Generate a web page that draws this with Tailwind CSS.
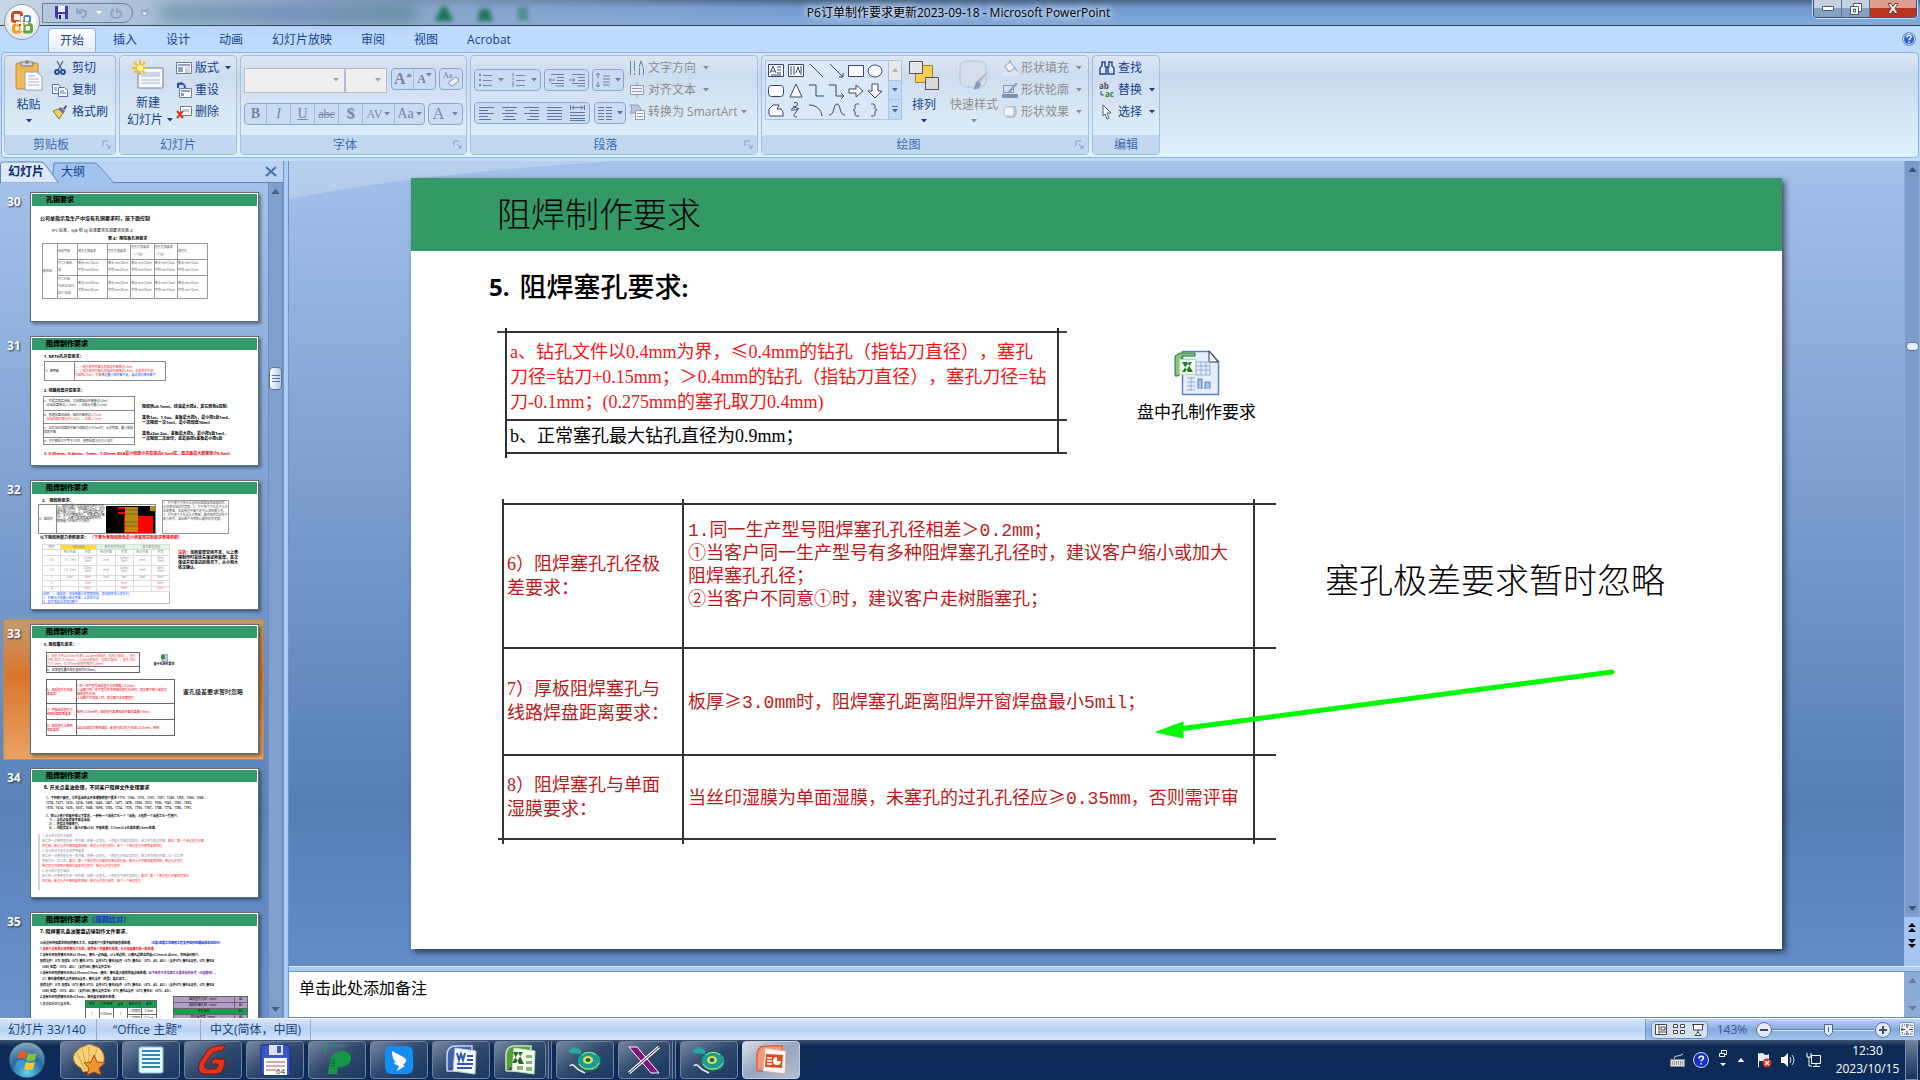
<!DOCTYPE html>
<html lang="zh-CN">
<head>
  <meta charset="UTF-8">
  <meta name="viewport" content="width=device-width, initial-scale=1.0">
  <title>P6订单制作要求更新2023-09-18 - Microsoft PowerPoint</title>
  <!-- Include Tailwind CSS -->
  <script src="https://cdn.jsdelivr.net/npm/@tailwindcss/browser@4"></script>
</head>
<body class="h-screen flex flex-col overflow-hidden bg-[#bfdbff] text-xs text-[#15428b] font-['Open_Sans','Noto_Sans_CJK_SC',sans-serif]">

  <!-- Shared symbols -->
  <svg class="hidden">
    <symbol id="caret" viewBox="0 0 6 4"><path d="M0 0h6L3 3.5z" fill="currentColor" /></symbol>
    <symbol id="up" viewBox="0 0 10 6"><path d="M0 6h10L5 0z" fill="currentColor" /></symbol>
    <symbol id="down" viewBox="0 0 10 6"><path d="M0 0h10L5 6z" fill="currentColor" /></symbol>
    <symbol id="launcher" viewBox="0 0 9 9"><path d="M1 6V1h5M4 4l4 4M8 5v3H5" fill="none" stroke="#7b9cc8" /></symbol>
    <symbol id="disc" viewBox="0 0 34 28">
      <path d="M3 15c0 9 10 12 18 11s12-5 12-10l-6-8-18 1z" fill="#44506e" />
      <path d="M2 20c3-4 6 3 9 4l6 3" stroke="#eee" stroke-width="1.5" fill="none" />
      <ellipse cx="21" cy="15" rx="12" ry="10" fill="#189c96" stroke="#0b5b60" />
      <path d="M11 18c4 7 16 7 20-1M14 9c4-4 11-3 14 0" stroke="#e2de54" fill="none" />
      <ellipse cx="20" cy="14" rx="5" ry="4" fill="#e2de54" />
      <ellipse cx="20" cy="14" rx="2.500" ry="2" fill="#14605f" />
      <path d="M1 4l6-3 6 3v4L2 7z" fill="#22aaa4" />
    </symbol>
  </svg>

  <!-- Title bar -->
  <header class="relative z-10 flex h-[26px] shrink-0 border-b border-[#33475f] bg-linear-to-b from-[#4c6688] via-[#7299cf] via-30% to-[#84abdc]">
    <div class="flex flex-1 items-center bg-linear-to-r from-[#c9d6e6] via-[#90a9c8] via-35% to-transparent">
      <div class="ml-[42px] flex h-5 w-[91px] items-center gap-2 rounded-r-full border border-[#65809f] bg-[#b1c4dc]/70 pl-3">
        <button aria-label="保存"><svg class="h-[13px] w-[13px]" viewBox="0 0 13 13"><path d="M0 0h13v13H2L0 11z" fill="#3c3ca8" /><path d="M3 0h7v6H3z" fill="#eef2fb" /><path d="M3 8h7v5H3z" fill="#ccd2ee" /><path d="M4 9h2v4H4z" fill="#23236d" /></svg></button>
        <button aria-label="撤消"><svg class="h-3 w-3" viewBox="0 0 12 12" fill="none" stroke="#8da4c3" stroke-width="2"><path d="M1 1v5h5M2 5c3-3 8-2 8 1s-2 4-4 5" /></svg></button>
        <svg class="h-1 w-1.5 text-white"><use href="#caret" /></svg>
        <button aria-label="重复"><svg class="h-3 w-3" viewBox="0 0 12 12" fill="none" stroke="#8da4c3" stroke-width="2"><path d="M4 2C0 4 0 11 6 11s6-6 3-8M7 1v4h4" /></svg></button>
      </div>
      <svg class="ml-2 h-2 w-[7px]" viewBox="0 0 7 8"><path d="M0 0h7v1H0zM0 3h7L3.500 7z" fill="#fff" stroke="#3e5c86" stroke-width=".5" /></svg>
      <!-- Windows showing through the glass -->
      <div class="ml-3 h-3 w-64 bg-linear-to-r from-[#3f7d86]/70 via-[#4f6da5]/60 to-[#2f6560]/60 blur-sm"></div>
      <svg class="ml-4 h-5 w-24 blur-[2px]" viewBox="0 0 96 20" fill="#1f7558"><path d="M12 1l10 17H2z" /><path d="M48 6h9l4 12H46z" /><path d="M86 4h10v14H86z" opacity=".5" /></svg>
    </div>
    <h1 class="flex items-center px-2 text-black [text-shadow:0_0_8px_#fff,0_0_6px_#fff]">P6订单制作要求更新2023-09-18 - Microsoft PowerPoint</h1>
    <div class="flex flex-1 items-start justify-end pr-[3px]">
      <div class="flex h-[18px] overflow-hidden rounded-b border border-t-0 border-[#3f5474] shadow-[0_0_0_1px_#c8dbf1]">
        <button aria-label="最小化" class="flex w-7 items-center justify-center border-r border-[#5d7595] bg-linear-to-b from-[#c3d1e2] from-45% to-[#86a0c2] to-50%"><svg class="h-[5px] w-3"><path d="M.5 .5h11v4H.5z" fill="#fff" stroke="#4a5a72" /></svg></button>
        <button aria-label="还原" class="flex w-7 items-center justify-center border-r border-[#5d7595] bg-linear-to-b from-[#c3d1e2] from-45% to-[#86a0c2] to-50%"><svg class="h-3 w-3" fill="#fff" stroke="#4a5a72"><path d="M3.500 .5h8v8h-8z" /><path d="M.5 3.500h8v8h-8zM3.500 6h2v3h-2z" /></svg></button>
        <button aria-label="关闭" class="flex w-[46px] items-center justify-center bg-linear-to-b from-[#dd9c90] from-45% to-[#b8341f] to-50%"><svg class="h-[11px] w-3" viewBox="0 0 12 11"><path d="M1 .5h3l2 3 2-3h3L8 5.500l3 5H8l-2-3-2 3H1l3-5z" fill="#fff" stroke="#6a3a3a" /></svg></button>
      </div>
    </div>
    <!-- Office button -->
    <button aria-label="Office 按钮" class="absolute left-1 top-1">
      <svg class="h-9 w-9" viewBox="0 0 36 36"><circle cx="18" cy="18" r="17.500" fill="#e4e8ee" stroke="#8297b3" /><circle cx="18" cy="15" r="14" fill="#fbfcfd" />
        <g fill="none"><rect x="8.500" y="8.500" width="9" height="9" rx="2" stroke="#cf4a22" stroke-width="3" /><rect x="20" y="12" width="6" height="6" rx="1.500" stroke="#4d86cc" stroke-width="2" /><rect x="9.500" y="21" width="7" height="7" rx="2" stroke="#f3a01d" stroke-width="3" /><rect x="20" y="20.500" width="7.500" height="7.500" rx="2" stroke="#66a52d" stroke-width="3" /><path d="M18 12v15M12 19h12" stroke="#fbfcfd" stroke-width="3" /></g>
        <path d="M15 16h2v2h-2zM19 19h2v2h-2z" fill="#f3a01d" /><path d="M19 16h2v2h-2z" fill="#4d86cc" /><path d="M15 20h2v2h-2z" fill="#cf4a22" />
      </svg>
    </button>
  </header>

  <!-- Ribbon tabs -->
  <nav class="flex h-[26px] shrink-0 items-end gap-[5px] pl-12 pr-1">
    <a href="#" class="flex h-6 items-center rounded-t border border-b-0 border-[#8db2e3] bg-linear-to-b from-white to-[#e3edf8] px-[11px]">开始</a>
    <a href="#" class="flex h-6 items-center px-3">插入</a>
    <a href="#" class="flex h-6 items-center px-3">设计</a>
    <a href="#" class="flex h-6 items-center px-3">动画</a>
    <a href="#" class="flex h-6 items-center px-3">幻灯片放映</a>
    <a href="#" class="flex h-6 items-center px-3">审阅</a>
    <a href="#" class="flex h-6 items-center px-3">视图</a>
    <a href="#" class="flex h-6 items-center px-3">Acrobat</a>
    <button aria-label="帮助" class="ml-auto mb-1.5"><svg class="h-[14px] w-[14px]" viewBox="0 0 14 14"><circle cx="7" cy="7" r="6.500" fill="#2a62d0" stroke="#6f92c8" /><circle cx="7" cy="7" r="5.500" fill="none" stroke="#dce9fb" /><path d="M5 5.500c0-3 4-3 4-.5C9 6.500 7 6.500 7 8.300M7 9.500V11" stroke="#fff" stroke-width="1.500" fill="none" /></svg></button>
  </nav>

  <!-- Ribbon -->
  <section class="mx-px mb-[3px] flex h-[106px] shrink-0 gap-[3px] rounded border border-[#8db2e3] bg-linear-to-b from-[#dbe6f4] via-[#c9d9ed] via-20% to-[#e0f2fc] px-0.5 pb-0.5 pt-0.5">

    <!-- Clipboard -->
    <div class="flex w-[112px] flex-col rounded border border-[#a3bfe0] bg-white/10">
      <div class="flex flex-1 pt-px">
        <button class="flex w-[47px] flex-col items-center pt-[3px]">
          <svg class="h-[31px] w-7" viewBox="0 0 28 31"><rect x="1" y="3" width="22" height="26" rx="2" fill="#f0b952" stroke="#bb8a3c" /><path d="M6 2h12v4H6z" fill="#d8d8d8" stroke="#777" /><circle cx="12" cy="2" r="2" fill="#888" /><path d="M10 12h12l5 5v13H10z" fill="#fff" stroke="#8da0c4" /><path d="M13 16h7M13 19h11M13 22h11M13 25h11" stroke="#9dafd0" /></svg>
          <span class="mt-1 leading-5">粘贴</span>
          <svg class="mt-1 h-1 w-1.5"><use href="#caret" /></svg>
        </button>
        <div class="flex flex-col">
          <button class="flex h-[22px] items-center gap-1"><svg class="h-4 w-4" viewBox="0 0 16 16" fill="none"><path d="M5 1l5 9M11 1L6 10" stroke="#5f7085" stroke-width="1.500" /><circle cx="5" cy="12" r="2" stroke="#2d4e95" stroke-width="2" /><circle cx="11" cy="12" r="2" stroke="#2d4e95" stroke-width="2" /></svg>剪切</button>
          <button class="flex h-[22px] items-center gap-1"><svg class="h-4 w-4" viewBox="0 0 16 16" fill="#fff" stroke="#4c6fb3"><path d="M.5 2.500h6l2 2v7h-8z" /><path d="M6.500 5.500h6l3 3v6h-9z" /><path d="M2 6h3M2 8h3M8 9h4M8 11h6" /></svg>复制</button>
          <button class="flex h-[22px] items-center gap-1"><svg class="h-4 w-4" viewBox="0 0 16 16"><path d="M1 7l6-2 4 4-4 6z" fill="#ecd662" stroke="#8c7a25" /><path d="M6 5l3-2 4 4-2 3z" fill="#6f7690" /><path d="M11 4l3-3 1 1-2 4z" fill="#4c5675" /></svg>格式刷</button>
        </div>
      </div>
      <div class="flex h-[19px] items-center bg-[#c2d8f0] pl-[14px] pr-1 text-[#3e6aaa]"><span class="flex-1 pl-[14px]">剪贴板</span><svg class="h-[9px] w-[9px]"><use href="#launcher" /></svg></div>
    </div>

    <!-- Slides -->
    <div class="flex w-[118px] flex-col rounded border border-[#a3bfe0] bg-white/10">
      <div class="flex flex-1 pt-px">
        <button class="flex w-[56px] flex-col items-center pt-[3px]">
          <svg class="h-[30px] w-8" viewBox="0 0 32 30"><rect x="6" y="8" width="25" height="20" rx="1" fill="#f7f9fc" stroke="#71809c" /><path d="M9 12h19v5H9z" fill="#ccd6e6" /><path d="M9 20h19M9 23h19" stroke="#a9b7cd" /><path d="M8 0v15M0 8h15M2 2l11 11M13 2L2 13" stroke="#f2bf18" stroke-width="2" /><circle cx="8" cy="8" r="3" fill="#fff399" /></svg>
          <span class="mt-1 leading-[17px]">新建</span>
          <span class="flex items-center gap-1 whitespace-nowrap pl-1 leading-[17px]">幻灯片<svg class="h-1 w-1.5"><use href="#caret" /></svg></span>
        </button>
        <div class="flex flex-col">
          <button class="flex h-[22px] items-center gap-[3px]"><svg class="h-4 w-4" viewBox="0 0 16 16"><path d="M.5 2.500h15v11H.5z" fill="#fff" stroke="#6d7e9c" /><path d="M2 4h12v2H2zM2 7h5v5H2z" fill="#8ba2c6" /><path d="M9 8h5M9 10h5M9 12h5" stroke="#9aabc8" /></svg>版式<svg class="ml-[3px] h-1 w-1.5"><use href="#caret" /></svg></button>
          <button class="flex h-[22px] items-center gap-[3px]"><svg class="h-4 w-4" viewBox="0 0 16 16"><path d="M3.500 6.500h12v9h-12z" fill="#fff" stroke="#6d7e9c" /><path d="M5 8h9v2H5zM5 11h3v3H5z" fill="#8ba2c6" /><path d="M2 6V2h4M2 2c4-2 7 0 7 4" stroke="#2457b8" stroke-width="2" fill="none" /></svg>重设</button>
          <button class="flex h-[22px] items-center gap-[3px]"><svg class="h-4 w-4" viewBox="0 0 16 16"><path d="M4.500 2.500h11v9h-11z" fill="#fff" stroke="#6d7e9c" /><path d="M7 5h6v3H7z" fill="#b6c5dd" /><path d="M1 7l6 7M7 7l-6 7" stroke="#de3118" stroke-width="2" /></svg>删除</button>
        </div>
      </div>
      <div class="flex h-[19px] items-center justify-center bg-[#c2d8f0] text-[#3e6aaa]">幻灯片</div>
    </div>

    <!-- Font -->
    <div class="flex w-[227px] flex-col rounded border border-[#a3bfe0] bg-white/10 text-[#7286ab]">
      <div class="flex flex-1 flex-col gap-2.5 px-[3px] pt-3 font-['Liberation_Serif',serif]">
        <div class="flex items-start">
          <select aria-label="字体" disabled class="h-[25px] w-[101px] appearance-none border border-[#b1bccd] bg-[#efefef] opacity-100"></select>
          <svg class="-ml-3 mt-2.5 h-1 w-1.5 text-[#a4a4a4]"><use href="#caret" /></svg>
          <select aria-label="字号" disabled class="ml-1.5 h-[25px] w-[43px] appearance-none border border-[#b1bccd] bg-[#efefef] opacity-100"></select>
          <svg class="-ml-3 mt-2.5 h-1 w-1.5 text-[#a4a4a4]"><use href="#caret" /></svg>
          <div class="ml-2.5 flex h-[22px] w-[45px] divide-x divide-[#a4bde0] rounded-sm border border-[#85a6d6] bg-[#cbdcf2]">
            <button aria-label="增大字号" class="flex flex-1 items-center justify-center text-base font-bold leading-5">A<svg class="mb-2 h-1 w-1.5"><use href="#up" /></svg></button>
            <button aria-label="减小字号" class="flex flex-1 items-center justify-center text-xs font-bold leading-5">A<svg class="mb-2 h-1 w-1.5"><use href="#caret" /></svg></button>
          </div>
          <button aria-label="清除格式" class="ml-[3px] flex h-[22px] w-6 items-center justify-center rounded-sm border border-[#85a6d6] bg-[#cbdcf2]"><svg class="h-4 w-4" viewBox="0 0 16 16"><text x="0" y="7" font-size="8" fill="#6a7ea5">Aa</text><rect x="6" y="8" width="10" height="5" rx="2" transform="rotate(-35 11 11)" fill="#f2f5fa" stroke="#8b9dbd" /></svg></button>
        </div>
        <div class="flex gap-[3px]">
          <div class="flex h-[22px] w-[181px] items-center divide-x divide-[#a4bde0] rounded-sm border border-[#85a6d6] bg-[#cbdcf2] text-sm">
            <button class="h-5 w-[22px] font-bold leading-5">B</button>
            <button class="h-5 w-6 italic leading-5">I</button>
            <button class="h-5 w-6 underline leading-5">U</button>
            <button class="h-5 w-6 line-through leading-5 text-xs">abc</button>
            <button class="h-5 w-6 font-bold leading-5 [text-shadow:1px_1px_1px_#8895b5]">S</button>
            <button class="flex h-5 w-8 items-center justify-center gap-0.5 text-xs leading-5">AV<svg class="h-1 w-1.5"><use href="#caret" /></svg></button>
            <button class="flex h-5 flex-1 items-center justify-center gap-0.5 leading-5">Aa<svg class="h-1 w-1.5"><use href="#caret" /></svg></button>
          </div>
          <button class="flex h-[22px] w-[35px] items-center justify-center gap-2 rounded-sm border border-[#85a6d6] bg-[#cbdcf2] text-base leading-5">A<svg class="h-1 w-1.5"><use href="#caret" /></svg></button>
        </div>
      </div>
      <div class="flex h-[19px] items-center bg-[#c2d8f0] pr-1 text-[#3e6aaa]"><span class="flex-1 pr-1 text-center">字体</span><svg class="h-[9px] w-[9px]"><use href="#launcher" /></svg></div>
    </div>

    <!-- Paragraph -->
    <div class="flex w-[288px] flex-col rounded border border-[#a3bfe0] bg-white/10 text-[#8d8d8d]">
      <div class="flex flex-1 pl-[3px] pt-px">
        <div class="flex w-[155px] flex-col gap-[11px] pt-3">
          <div class="flex gap-[3px]">
            <div class="flex h-[22px] w-[67px] items-center justify-around rounded-sm border border-[#85a6d6] bg-[#cbdcf2] text-[#7286ab]">
              <button aria-label="项目符号"><svg class="h-3.5 w-3.5" viewBox="0 0 14 14" stroke="currentColor"><path d="M1 2h2M1 7h2M1 12h2" stroke-width="2" /><path d="M5 2.500h9M5 7.500h9M5 12.500h9" /></svg></button><svg class="h-1 w-1.5"><use href="#caret" /></svg>
              <button aria-label="编号"><svg class="h-3.5 w-3.5" viewBox="0 0 14 14" stroke="currentColor"><path d="M2 0v4M1 6h2M1 9h2M1 11h2M1 13h2" /><path d="M5 2.500h9M5 7.500h9M5 12.500h9" /></svg></button><svg class="h-1 w-1.5"><use href="#caret" /></svg>
            </div>
            <div class="flex h-[22px] w-[45px] items-center justify-around rounded-sm border border-[#85a6d6] bg-[#cbdcf2] text-[#6b80a6]">
              <button aria-label="减少缩进"><svg class="h-3.5 w-4" viewBox="0 0 16 14" stroke="currentColor"><path d="M3 1.500h13M9 4.500h7M9 7.500h7M3 10.500h13M8 13h8M7 7H1M3 5L1 7l2 2" fill="none" /></svg></button>
              <button aria-label="增加缩进"><svg class="h-3.5 w-4" viewBox="0 0 16 14" stroke="currentColor"><path d="M3 1.500h13M9 4.500h7M9 7.500h7M3 10.500h13M8 13h8M0 7h6M4 5l2 2-2 2" fill="none" /></svg></button>
            </div>
            <div class="flex h-[22px] w-8 items-center justify-around rounded-sm border border-[#85a6d6] bg-[#cbdcf2] text-[#6b80a6]">
              <button aria-label="行距"><svg class="h-4 w-4" viewBox="0 0 16 16" stroke="currentColor" fill="none"><path d="M3 1v5M1 3l2-2 2 2M3 10v5M1 13l2 2 2-2M8 4h7M8 7h7M8 10h7M8 13h7" /></svg></button><svg class="h-1 w-1.5"><use href="#caret" /></svg>
            </div>
          </div>
          <div class="flex gap-1">
            <div class="flex h-[22px] w-[116px] items-center justify-around rounded-sm border border-[#85a6d6] bg-[#cbdcf2] text-[#5f759e]">
              <button aria-label="左对齐"><svg class="h-3.5 w-[15px]" stroke="currentColor"><path d="M0 1.500h15M0 4.500h9M0 7.500h15M0 10.500h9M0 13.500h12" /></svg></button>
              <button aria-label="居中"><svg class="h-3.5 w-[15px]" stroke="currentColor"><path d="M0 1.500h15M3 4.500h9M0 7.500h15M3 10.500h9M1 13.500h13" /></svg></button>
              <button aria-label="右对齐"><svg class="h-3.5 w-[15px]" stroke="currentColor"><path d="M0 1.500h15M6 4.500h9M0 7.500h15M6 10.500h9M3 13.500h12" /></svg></button>
              <button aria-label="两端对齐"><svg class="h-3.5 w-[15px]" stroke="currentColor"><path d="M0 1.500h15M0 4.500h15M0 7.500h15M0 10.500h15M0 13.500h15" /></svg></button>
              <button aria-label="分散对齐"><svg class="h-4 w-[15px]" stroke="currentColor" fill="none"><path d="M.5 0v5M14.500 0v5M2 2.500h11M4 .5l-2 2 2 2M11 .5l2 2-2 2M0 7.500h15M0 10.500h15M0 13.500h15M0 15.500h15" /></svg></button>
            </div>
            <div class="flex h-[22px] w-8 items-center justify-around rounded-sm border border-[#85a6d6] bg-[#cbdcf2] text-[#5f759e]">
              <button aria-label="分栏"><svg class="h-3.5 w-3.5" stroke="currentColor"><path d="M0 1.500h6M0 4.500h6M0 7.500h6M0 10.500h6M0 13.500h6M8 1.500h6M8 4.500h6M8 7.500h6M8 10.500h6M8 13.500h6" /></svg></button><svg class="h-1 w-1.5"><use href="#caret" /></svg>
            </div>
          </div>
        </div>
        <div class="flex flex-col">
          <button class="flex h-[22px] items-center gap-[3px] whitespace-nowrap"><svg class="h-4 w-4" viewBox="0 0 16 16" stroke="#6f7f9c" fill="none"><path d="M1.500 1v14M5.500 1v10M10.500 8v7M14.500 8v7M10 7l2-6 2 6M5.500 15v-2" /></svg>文字方向<svg class="ml-1 h-1 w-1.5"><use href="#caret" /></svg></button>
          <button class="flex h-[22px] items-center gap-[3px] whitespace-nowrap"><svg class="h-4 w-4" viewBox="0 0 16 16" stroke="#8e9bb3"><path d="M1.500 3.500h13v9h-13z" fill="#eef3fa" /><path d="M3 6.500h10M3 9.500h10M8 0v3M8 13v3" /></svg>对齐文本<svg class="ml-1 h-1 w-1.5"><use href="#caret" /></svg></button>
          <button class="flex h-[22px] items-center gap-[3px] whitespace-nowrap"><svg class="h-4 w-4" viewBox="0 0 16 16" stroke="#8e9bb3"><path d="M1 1h8l3 4-3 4H1l2-4z" fill="#b9c7dc" /><path d="M6.500 6.500h9v9h-9z" fill="#f3f6fb" /><path d="M8 9.500h6M8 12.500h6" /></svg>转换为 SmartArt<svg class="ml-px h-1 w-1.5"><use href="#caret" /></svg></button>
        </div>
      </div>
      <div class="flex h-[19px] items-center bg-[#c2d8f0] pr-1 text-[#3e6aaa]"><span class="flex-1 pr-1 text-center">段落</span><svg class="h-[9px] w-[9px]"><use href="#launcher" /></svg></div>
    </div>

    <!-- Drawing -->
    <div class="flex w-[328px] flex-col rounded border border-[#a3bfe0] bg-white/10">
      <div class="flex flex-1 pl-[3px] pt-px">
        <div class="mt-[3px] flex h-[60px] w-[137px] border border-[#a9c4e6] bg-[#dae8f9]">
          <svg class="h-[58px] w-[122px]" viewBox="0 0 122 58" fill="none" stroke="#34476b">
            <path d="M2.500 3.500h15v12h-15zM22.500 3.500h15v12h-15z" fill="#fff" /><path d="M4 12l3-7 3 7M5 10h4M11 6h4M11 9h4M11 12h4M5 14h10M25 5v9M28 5v9M30 12l2-6 2 6M35 5v9" />
            <path d="M44 3l13 13M64 3l13 13M77 12v4h-4" /><path d="M82.500 4.500h15v11h-15z" fill="#fff" /><ellipse cx="109" cy="10" rx="7" ry="6" fill="#fff" />
            <rect x="2.500" y="24.500" width="15" height="11" rx="3" fill="#fff" /><path d="M30 23l6 13H24z" fill="#fff" />
            <path d="M43 24h7v11h8M63 24h7v11h8M75 32l3 3-3 3" /><path d="M83 28h7v-4l7 6-7 6v-4h-7z" fill="#fff" /><path d="M106 23h6v7h4l-7 7-7-7h4z" fill="#fff" />
            <path d="M3 53V48l4-4h6l-2 4h4l2 3v4H4z" fill="#fff" /><path d="M28 42c4-2 5 2 1 4s-6 4-1 3 5-2 2 2-3 4 1 5M27 45l6 3M43 44c7 0 12 4 13 11M63 54c6 0 4-11 8-11s2 11 8 11M93 43c-4 0-4 0-4 4 0 1-1 2-2 2 1 0 2 1 2 2 0 4 0 4 4 4M105 43c4 0 4 0 4 4 0 1 1 2 2 2-1 0-2 1-2 2 0 4 0 4-4 4" />
          </svg>
          <div class="flex flex-1 flex-col divide-y divide-[#a9c4e6] border-l border-[#a9c4e6] bg-[#c6daf4]">
            <button aria-label="上一行" class="flex flex-1 items-center justify-center bg-[#e8e8e8] text-[#aaa]"><svg class="h-1 w-1.5"><use href="#up" /></svg></button>
            <button aria-label="下一行" class="flex flex-1 items-center justify-center text-[#3d6db3]"><svg class="h-1 w-1.5"><use href="#caret" /></svg></button>
            <button aria-label="其他形状" class="flex flex-1 flex-col items-center justify-center gap-0.5 text-[#3d6db3]"><span class="h-px w-1.5 bg-[#3d6db3]"></span><svg class="h-1 w-1.5"><use href="#caret" /></svg></button>
          </div>
        </div>
        <button class="flex w-11 flex-col items-center pt-[3px]">
          <svg class="h-[31px] w-8" viewBox="0 0 32 31"><path d="M7.500 5.500h17v17h-17z" fill="#f6cf4f" stroke="#a78428" /><path d="M1.500 1.500h13v12h-13z" fill="#e6e6e6" stroke="#555" /><path d="M17.500 17.500h13v12h-13z" fill="#d9d9d9" stroke="#555" /></svg>
          <span class="mt-1 leading-5">排列</span>
          <svg class="mt-1 h-1 w-1.5"><use href="#caret" /></svg>
        </button>
        <button class="flex w-14 flex-col items-center pt-[3px] text-[#8d8d8d]">
          <svg class="h-[31px] w-8" viewBox="0 0 32 31"><rect x="2" y="1" width="26" height="26" rx="6" fill="#d5deea" stroke="#b2c0d4" /><path d="M30 11L22 23l-3-2z" fill="#aab5c6" /><path d="M19 21l4 3c-1 5-5 6-8 5 3-2 1-5 4-8z" fill="#8597b4" /></svg>
          <span class="mt-1 leading-5">快速样式</span>
          <svg class="mt-1 h-1 w-1.5"><use href="#caret" /></svg>
        </button>
        <div class="flex flex-col text-[#8d8d8d]">
          <button class="flex h-[22px] items-center gap-[3px] whitespace-nowrap"><svg class="h-4 w-4" viewBox="0 0 16 16"><path d="M3 6l5-4 5 6-6 4z" fill="#f4f6fa" stroke="#8796b0" /><path d="M13 8l2 3M8 2V0" stroke="#8796b0" /><path d="M0 12h16v4H0z" fill="#dfe5ee" /></svg>形状填充<svg class="ml-1 h-1 w-1.5"><use href="#caret" /></svg></button>
          <button class="flex h-[22px] items-center gap-[3px] whitespace-nowrap"><svg class="h-4 w-4" viewBox="0 0 16 16"><path d="M1.500 3.500h10v7h-10z" fill="none" stroke="#8796b0" /><path d="M14 1l1 1-7 8-2 1 1-2z" fill="#98a7bf" stroke="#8796b0" /><path d="M0 12h16v4H0z" fill="#7f92b4" /></svg>形状轮廓<svg class="ml-1 h-1 w-1.5"><use href="#caret" /></svg></button>
          <button class="flex h-[22px] items-center gap-[3px] whitespace-nowrap"><svg class="h-4 w-4" viewBox="0 0 16 16"><path d="M3 5l3-3h8l1 8-3 4H4z" fill="#b5c0d2" /><rect x="2" y="3" width="10" height="9" rx="2" fill="#f2f5f9" stroke="#b5c0d2" /></svg>形状效果<svg class="ml-1 h-1 w-1.5"><use href="#caret" /></svg></button>
        </div>
      </div>
      <div class="flex h-[19px] items-center bg-[#c2d8f0] pr-1 text-[#3e6aaa]"><span class="flex-1 pr-5 text-center">绘图</span><svg class="h-[9px] w-[9px]"><use href="#launcher" /></svg></div>
    </div>

    <!-- Editing -->
    <div class="flex w-[68px] flex-col rounded border border-[#a3bfe0] bg-white/10">
      <div class="flex flex-1 flex-col pl-1.5 pt-px">
        <button class="flex h-[22px] items-center gap-[3px]"><svg class="h-4 w-4" viewBox="0 0 16 16" fill="#dce6f6" stroke="#2c4c8c" stroke-width="1.500"><path d="M3 2h3v4l1 2v6H1V8l2-2zM10 2h3v4l2 2v6H9V8l1-2zM6 7h4" /></svg>查找</button>
        <button class="flex h-[22px] items-center gap-[3px]"><svg class="h-4 w-4" viewBox="0 0 16 16" font-size="8" font-weight="bold"><text x="0" y="7" fill="#555">ab</text><text x="6" y="15" fill="#2a8a2a">ac</text><path d="M2 9v4h3" stroke="#2c4c8c" fill="none" /></svg>替换<svg class="ml-1 h-1 w-1.5"><use href="#caret" /></svg></button>
        <button class="flex h-[22px] items-center gap-[3px]"><svg class="h-4 w-4" viewBox="0 0 16 16"><path d="M4 1l8 8H8l2 5-2 1-2-5-2 2z" fill="#fff" stroke="#46597d" /></svg>选择<svg class="ml-1 h-1 w-1.5"><use href="#caret" /></svg></button>
      </div>
      <div class="flex h-[19px] items-center justify-center bg-[#c2d8f0] text-[#3e6aaa]">编辑</div>
    </div>
  </section>

  <!-- Workspace -->
  <div class="flex min-h-0 flex-1">

    <!-- Slide list -->
    <aside class="flex w-[283px] shrink-0 flex-col">
      <div class="relative flex h-[22px] shrink-0 items-center border-b border-[#5f87bd] bg-[#bcd3f5]">
        <svg class="absolute left-0 top-0 h-[22px] w-[115px]" viewBox="0 0 115 22" stroke="#5f87bd"><path d="M52 22l2-20h40q3 0 5 3l15 17" fill="#a3c3ef" /><path d="M.5 22V3q0-2 3-2h36q4 0 6 3l13 18z" fill="#dce9fb" /></svg>
        <button class="relative ml-2 font-bold text-[#0d2b66]">幻灯片</button>
        <button class="relative ml-[17px]">大纲</button>
        <button aria-label="关闭窗格" class="ml-auto mr-1.5"><svg class="h-[11px] w-3" viewBox="0 0 12 11"><path d="M1 1l10 9M11 1L1 10" stroke="#47719f" stroke-width="2" /></svg></button>
      </div>
      <div class="flex min-h-0 flex-1 bg-linear-to-b from-[#a4c1ea] via-[#5a82b9] via-75% to-[#6b92cc]">
        <ol class="min-w-0 flex-1 space-y-[3px] overflow-hidden pl-[3px] pr-1 pt-1 text-[4px] leading-[5px] text-black [&_b.n]:w-[27px]">

          <li class="flex h-[141px] pt-[5px]">
            <b class="n pl-1 pt-1 text-xs leading-3 text-white [text-shadow:1px_1px_2px_#234]">30</b>
            <div class="h-[130px] w-[229px] overflow-hidden border border-[#5b6b80] bg-white p-px shadow-[2px_2px_3px_#0006]">
              <div class="h-3 bg-[#339966] pl-[14px] text-[7px] font-black leading-[11px]">孔铜要求</div>
              <div class="mt-2.5 whitespace-nowrap pl-2 text-[5px] font-bold">公司单指示及生产中没有孔铜要求时，按下面控制</div>
              <div class="mt-[7px] pl-5">IPC 标准，GJB 和 QJ 标准要求孔铜要求见表 4：</div>
              <div class="mt-[3px] pl-[76px] font-bold">表 4：刚性板孔铜要求</div>
              <table class="ml-[10px] mt-0.5 h-14 w-[166px] table-fixed border-collapse whitespace-nowrap text-[3px] leading-[7px] text-[#555] [&_td]:border [&_td]:border-[#999]">
                <tr><td rowspan="3" class="w-[15px]">刚性板</td><td class="w-5">验收等级</td><td class="w-[30px]">通孔孔铜要求</td><td>盲孔孔铜要求</td><td>埋孔孔铜要求<br>（＞2层）</td><td>埋孔孔铜要求<br>（2 层）</td><td class="w-[30px]">微盲孔</td></tr>
                <tr><td>IPC-II 级标<br>准</td><td>单点 min18um<br>平均 min20um</td><td>单点 min18um<br>平均 min20um</td><td>单点 min13um<br>平均 min15um</td><td>单点 min13um<br>平均 min15um</td><td>单点 min10um<br>平均 min12um</td></tr>
                <tr><td>IPC-III 级<br>/GJB362B/Q<br>J831 标准</td><td>单点 min20um<br>平均 min25um</td><td>单点 min20um<br>平均 min25um</td><td>单点 min13um<br>平均 min15um</td><td>单点 min13um<br>平均 min15um</td><td>单点 min10um<br>平均 min12um</td></tr>
              </table>
            </div>
          </li>

          <li class="flex h-[141px] pt-[5px]">
            <b class="n pl-1 pt-1 text-xs leading-3 text-white [text-shadow:1px_1px_2px_#234]">31</b>
            <div class="h-[130px] w-[229px] overflow-hidden border border-[#5b6b80] bg-white p-px shadow-[2px_2px_3px_#0006]">
              <div class="h-3 bg-[#339966] pl-[14px] text-[7px] font-black leading-[11px]">阻焊制作要求</div>
              <div class="mt-1 pl-3 font-bold">1. NPTH孔开窗要求：</div>
              <table class="ml-3 mt-0.5 h-5 w-[122px] border-collapse text-[3px] leading-[4px] text-red-500 [&_td]:border [&_td]:border-[#888]">
                <tr><td class="w-[30px] text-black">1）单面板</td><td>1、一般孔单面开窗孔的阻焊开窗单边≥3mil<br>2、二钻孔单面开窗孔的阻焊开窗单边≥4mil，如果空间不足<br>可减到2.5mil，仍需<span class="text-blue-700">单边最小按开窗不足，要走询问单给客户</span></td></tr>
              </table>
              <div class="mt-[7px] pl-3 font-bold">2. 线路焊盘开窗要求：</div>
              <div class="mt-[3px] flex gap-[7px]">
                <table class="ml-[11px] h-[49px] w-[92px] border-collapse text-[3px] leading-[4px] text-[#333] [&_td]:border [&_td]:border-[#888]">
                  <tr><td>a、有覆盖铜盖油板，大焊盘阻焊开窗单边≥3mil<br>（BGA焊盘单边≥1.5mil），局部允许最小≥2mil</td></tr>
                  <tr><td>b、普通焊盘绿油板，阻焊开窗单边<span class="text-red-500">≥2.5mil<br>（BGA焊盘开窗允许≥2mil），局部≥1.5mil</span></td></tr>
                  <tr><td>c、当有SMD焊盘的开窗与线路边小于2mil时，允许削盘，最小按线路宽开窗</td></tr>
                  <tr><td>d、对于圆焊大于等于3.0时，按照焊盘与孔大小加大</td></tr>
                </table>
                <div class="w-[86px] whitespace-nowrap pt-2 text-[4px] font-bold">阻焊桥≥0.1mm，绿油最大按4，其它颜色6控制。<div class="mt-1.5">黑色1oz，1.5oz，金板最大按5，最小按5处1mil，<br>一次阻焊一次1mil，最小按焊盘10mil</div><div class="mt-1.5">黑色≥2oz 2oz，金板最大按5，最小按5处1mil，<br>一次阻焊二次丝印，且最后按5金板最小按5处</div></div>
              </div>
              <div class="mt-1.5 whitespace-nowrap pl-3 font-bold text-red-600">3. 0.35mm、0.4mm、1mm、1.05mm BGA最小焊盘小开窗单边0.5mil控，盘边露最大能容至小0.5mil。</div>
            </div>
          </li>

          <li class="flex h-[141px] pt-[5px]">
            <b class="n pl-1 pt-1 text-xs leading-3 text-white [text-shadow:1px_1px_2px_#234]">32</b>
            <div class="h-[130px] w-[229px] overflow-hidden border border-[#5b6b80] bg-white p-px shadow-[2px_2px_3px_#0006]">
              <div class="h-3 bg-[#339966] pl-[14px] text-[7px] font-black leading-[11px]">阻焊制作要求</div>
              <div class="mt-1 flex pl-1.5">
                <div>
                  <div class="pl-1 font-bold">3.　阻焊桥要求：</div>
                  <div class="mt-px flex h-[30px] w-[118px] items-center border border-[#888] text-[3px] leading-[3px] text-[#333]">
                    <span class="w-[17px]">3）阻焊桥</span>
                    <span class="h-full w-[50px] border-l border-[#888]">1、阻焊桥最小宽度按油墨颜色不同进行区分控制，绿油最小4mil，其它颜色最小5mil；2、当焊盘间距不足时，允许开整窗处理，并需要询问客户；3、当客户要求保留阻焊桥时，需按能力评审后方可制作</span>
                    <svg class="h-[27px] w-[49px]" viewBox="0 0 49 27"><path d="M0 0h49v27H0z" /><path d="M12 1h8v2h-8zM12 6h8v2h-8zM18 10h29v17H18z" fill="#f00" /><path d="M19 1h13v25H19zM44 0h5v5h-5z" fill="#b58a10" /><path d="M19 4h13M19 8h13M19 16h13M19 20h13" stroke="#7d6212" /></svg>
                  </div>
                </div>
                <div class="ml-1.5 mt-0.5 h-[34px] w-[67px] border border-[#999] text-[3px] leading-[4px] text-[#555]">1、对于按下方所示位置的焊盘需要保留阻焊桥，必须保证阻焊桥宽度。2、对于按下方位置不允许出现整窗，如果单边开窗不足可以减到最小值。3、对于按下方位置允许整窗。最终按照实际生产能力制作，或由客户书面确认最终的桥宽度。</div>
              </div>
              <div class="mt-px whitespace-nowrap pl-2 font-bold">以下阻焊桥能力参照要求：　<span class="text-red-600">（下表为各阻焊颜色最小桥宽度控制要求表格参数）</span></div>
              <div class="mt-1 flex">
                <div class="ml-2.5">
                  <table class="h-12 w-[128px] table-fixed border-collapse whitespace-nowrap text-center text-[3px] leading-[3px] text-[#888] [&_td]:border [&_td]:border-[#ddd]">
                    <tr><td>铜厚</td><td colspan="2" class="bg-yellow-300">绿色油墨</td><td colspan="2" class="bg-green-100">黑色及白色油墨</td><td colspan="2" class="bg-green-100">其它颜色油墨</td></tr>
                    <tr><td></td><td>单边开窗</td><td>桥宽</td><td>单边开窗</td><td>桥宽</td><td>单边开窗</td><td>桥宽</td></tr>
                    <tr><td>0.5</td><td>1.5~2mil</td><td class="h-2.5">3.5mil<br>4mil</td><td>2mil</td><td>4.5mil<br>5mil</td><td>2mil</td><td>4mil<br>5mil</td></tr>
                    <tr><td>1.0</td><td>1.5~2mil</td><td class="h-2.5">3.5mil<br>4mil</td><td>2mil</td><td>4.5mil<br>5mil</td><td>2mil</td><td>4mil<br>5mil</td></tr>
                    <tr><td>2</td><td>2mil</td><td>4mil</td><td>2mil</td><td>5mil</td><td>2mil</td><td>5mil</td></tr>
                    <tr><td>3</td><td></td><td class="text-red-400">5mil</td><td></td><td class="text-red-400">6mil</td><td></td><td class="text-red-400">6mil</td></tr>
                    <tr><td>4</td><td></td><td class="text-red-400">6mil</td><td></td><td class="text-red-400">6mil</td><td></td><td class="text-red-400">6mil</td></tr>
                  </table>
                  <div class="h-3 w-[128px] whitespace-nowrap border border-t-0 border-[#bbb] text-[3px] leading-[4px] text-blue-600">说明：1、阻焊桥：绿油按最小桥宽度控制，其他颜色按上表执行；<br>2、开窗允许按最小单边开窗，以实际为准<br>3、如不满足必须询问客户</div>
                </div>
                <div class="ml-2 mt-1.5 w-[62px] font-bold"><span class="text-red-600">注意：</span>当桥宽度空间不足，以上表格制作时需优先保证桥宽度，其次保证开窗单边的情况下，从小到大依次确认。</div>
              </div>
            </div>
          </li>

          <li class="flex h-[141px] border border-[#b88a5c] bg-linear-to-b from-[#c39a6c] via-[#d9752b] via-40% to-[#e8a265] pt-1">
            <b class="n -ml-px shrink-0 pl-1 pt-1 text-xs leading-3 text-white [text-shadow:1px_1px_2px_#234]">33</b>
            <div class="h-[130px] w-[229px] shrink-0 overflow-hidden border border-[#5b6b80] bg-white p-px shadow-[2px_2px_3px_#0006]">
              <div class="h-3 bg-[#339966] pl-[14px] text-[7px] font-black leading-[11px]">阻焊制作要求</div>
              <div class="mt-1 pl-3 font-bold">5. 阻焊塞孔要求：</div>
              <div class="mt-[5px] flex">
                <table class="ml-[14px] h-[21px] w-[94px] border-collapse whitespace-nowrap text-[3px] leading-[4px] text-red-500 [&_td]:border [&_td]:border-[#666]">
                  <tr><td>a、钻孔文件以0.4mm为界，≤0.4mm的钻孔（指钻刀直径），塞孔<br>刀径=钻刀+0.15mm；＞0.4mm的钻孔（指钻刀直径），塞孔刀径=<br>刀-0.1mm；(0.275mm的塞孔取刀0.4mm)</td></tr>
                  <tr><td class="text-black">b、正常塞孔最大钻孔直径为0.9mm；</td></tr>
                </table>
                <div class="ml-2.5 flex w-7 flex-col items-center pt-0.5 text-[3px] font-bold"><svg class="h-2 w-[7px]"><path d="M1 0h5l1 2v6H1z" fill="#bcd0ee" stroke="#356" stroke-width=".5" /><path d="M0 1h4v4H0z" fill="#2f9444" /></svg>盘中孔制作要求</div>
              </div>
              <div class="mt-1.5 flex">
                <table class="ml-[14px] h-14 w-[129px] border-collapse whitespace-nowrap text-[3px] leading-[4px] text-red-600 [&_td]:border [&_td]:border-[#666]">
                  <tr><td class="w-[30px]">6）阻焊塞孔孔径极<br>差要求：</td><td class="h-6">1.同一生产型号阻焊塞孔孔径相差＞0.2mm；<br>①当客户同一生产型号有多种阻焊塞孔孔径时，建议客户缩小或加大<br>阻焊塞孔孔径；<br>②当客户不同意①时，建议客户走树脂塞孔；</td></tr>
                  <tr><td>7）厚板阻焊塞孔与<br>线路焊盘距离要求：</td><td class="h-4">板厚≥3.0mm时，阻焊塞孔距离阻焊开窗焊盘最小5mil；</td></tr>
                  <tr><td>8）阻焊塞孔与单面<br>湿膜要求：</td><td class="h-4">当丝印湿膜为单面湿膜，未塞孔的过孔孔径应≥0.35mm，否则</td></tr>
                </table>
                <span class="ml-2 mt-2.5 whitespace-nowrap text-[6px] font-medium leading-[6px]">塞孔极差要求暂时忽略</span>
              </div>
            </div>
          </li>

          <li class="flex h-[141px] pt-[5px]">
            <b class="n pl-1 pt-1 text-xs leading-3 text-white [text-shadow:1px_1px_2px_#234]">34</b>
            <div class="h-[130px] w-[229px] overflow-hidden whitespace-nowrap border border-[#5b6b80] bg-white p-px shadow-[2px_2px_3px_#0006]">
              <div class="h-3 bg-[#339966] pl-[14px] text-[7px] font-black leading-[11px]">阻焊制作要求</div>
              <div class="mt-[3px] pl-3 font-bold text-[5px]">6. 开关点盖油处理，不同客户阻焊文件处理要求</div>
              <div class="mt-1.5 pl-3.5 text-[3px] font-semibold leading-[5px]">1、下列客户板件，字符盖油的文件处理按照客户要求 1173、1206、1213、1232、1237、1249、1255、1260、1268、<br>1274、1327、1413、1418、1439、1443、1467、1477、1478、1500、1522、1530、1541、1552、1563、<br>1570、1614、1620、1637、1668、1695、1700、1724、1725、1750、1767、1768、1774、1780、1791。</div>
              <div class="mt-[3px] pl-3.5 text-[3px] font-semibold leading-[4px]">2、除以上客户的板件按以下要求，一种有一个油墨工艺一个「油墨」上阻焊一个油墨工艺一些客户。<br>　1）、半孔边及焊盘不能盖油墨。<br>　2）、外层走线按客户。<br>　3）、线路宽度上（最小开窗≥0.8）不做处理，0.2mm以上孔需处理0.3mm处理。</div>
              <div class="ml-1.5 mt-1 h-14 border-l-2 border-[#cdd8da] pl-0.5 text-[3px] leading-[5px] text-[#889]">1. 设计的半塞孔无要求<br>若工序一边单面塞孔另一面开窗，则单一边塞孔，一面塞孔可按正常处理。若工序为两边开窗，<span class="text-red-500">备注：第一个单边塞孔开窗</span><br><span class="text-red-500">处理板，单边允许开窗按要求控制，单边允许塞孔制作，若下一个单边塞孔时按照要求处理</span><br>2. 设计的过孔塞孔及加厚铜要求<br>若工序一边单面塞孔另一面开窗，则单一边塞孔，一面塞孔可按正常处理。若工序为两边开窗二次一次工序<br>的制作为一次工序。<span class="text-red-500">备注：第一个单边塞孔开窗处理单位处理板，单边允许开窗按要求控制，单边允许塞孔</span><br><span class="text-red-500">单边塞孔时按照开窗制作要求处理即可，单边允许塞孔制作</span><br>3. 设计的半塞孔阻焊<br>若工序一边单面塞孔另一面开窗，则单一边塞孔，一面塞孔可按正常处理。<span class="text-red-500">备注：第一个单边塞孔开窗处理单位</span><br><span class="text-red-500">处理板，单边允许开窗按要求控制，单边允许塞孔制作，若下一个单边塞孔</span></div>
            </div>
          </li>

          <li class="flex h-[141px] pt-[5px]">
            <b class="n pl-1 pt-1 text-xs leading-3 text-white [text-shadow:1px_1px_2px_#234]">35</b>
            <div class="h-[130px] w-[229px] overflow-hidden whitespace-nowrap border border-[#5b6b80] bg-white p-px shadow-[2px_2px_3px_#0006]">
              <div class="h-3 bg-[#339966] pl-[14px] text-[7px] font-black leading-[11px]">阻焊制作要求<span class="text-blue-800">（周期比对）</span></div>
              <div class="mt-[3px] pl-2 text-[5px] font-bold">7. 阻焊塞孔盖油塞盘边缘制作文件要求。</div>
              <div class="mt-1.5 pl-2 text-[3px] font-semibold leading-[6px]">以前没有特殊要求的阻焊塞孔工艺，如果客户只要不做的按普通处理。　　　　　　<span class="font-black text-blue-700">（D层/底层工艺按照工程文件制作处理标准单位执行）</span><br><span class="text-red-600">1.当客户没有指定阻焊塞孔工艺的，按照两个单面塞孔处理，允许双面塞孔按一般处理。</span><br>2.当有孔径阻焊塞孔孔径≤0.35mm，塞孔一边两面，以上单边的，以塞孔边距离焊盘≥0.2mm≤0.45mm，否则询问客户。<br>阻焊文件：GTS_阻焊A（GTS_塞孔 GTO）文件GTS_塞孔B文件（GTS_塞孔A）（GTS、A5、A5L）（文件GTS_塞孔A文件，GTS_塞孔B<br>（GBS_底层）（GTS、A5L）（文件GBS_塞孔文件命名）<br>3.当有孔径阻焊塞孔孔径≥0.35mm≤0.5mm（塞孔）塞孔最大按照焊盘边缘处理。<span class="text-purple-800">此下两条为非常规工艺要求仅供参考（内部使用）。</span><br>（2）塞孔按照塞孔文件制作A文件，塞孔文件（外层）最后加工。<br>阻焊文件：GTS_阻焊A（GTS_塞孔 GTO）文件GTS_塞孔B文件（GTS_塞孔A）（GTS、A5、A5L）（文件GTS_塞孔A文件，GTS_塞孔B<br>（GBS_底层）（GTS、A5L）（文件GBS_塞孔文件命名）GTS_塞孔A文件（GTS_塞孔B）（GTS、A5L）<br>4.当有孔径阻焊塞孔孔径≥0.5mm，按单面开窗制作处理。</div>
              <div class="flex pl-2 text-center text-[3px] leading-[5px]"><span class="pt-0.5">5.其他阻焊处理要求单。</span>
                <table class="ml-3 h-[22px] w-[72px] table-fixed border-collapse [&_td]:border [&_td]:border-[#666]"><tr class="bg-[#17a050]"><td>序号</td><td>文件名称</td><td>层名</td><td>制作方式</td><td>备注</td></tr><tr><td rowspan="2">1</td><td rowspan="2">0.35mm</td><td rowspan="2">1</td><td>一次塞孔</td><td>0.3um</td></tr><tr><td>二次塞孔</td><td>0.2um</td></tr></table>
                <table class="-mt-1 ml-4 h-[22px] w-[75px] border-collapse bg-[#b39cc9] [&_td]:border [&_td]:border-[#666]"><tr><td>阻焊塞孔孔径（mm）</td><td>A4</td></tr><tr><td>阻焊开窗孔径（mm）</td><td>A5</td></tr><tr class="bg-[#17a050]"><td>塞孔油墨</td><td>A5L</td></tr><tr><td>塞孔板厚度（mm）</td><td>A6</td></tr></table>
              </div>
            </div>
          </li>
        </ol>

        <!-- Slide list scrollbar -->
        <div class="flex w-[15px] flex-col items-center border-x border-[#6e8fbf] bg-[#7f9fcd] py-1.5 text-[#4a5f82]">
          <svg class="h-[5px] w-[9px]"><use href="#up" /></svg>
          <div class="mt-[173px] flex h-[23px] w-[13px] shrink-0 flex-col items-center justify-center gap-0.5 rounded-sm border border-[#5b7499] bg-linear-to-r from-white to-[#b7c9e4]"><i class="h-px w-2 bg-[#5b7499]"></i><i class="h-px w-2 bg-[#5b7499]"></i><i class="h-px w-2 bg-[#5b7499]"></i></div>
          <svg class="mt-auto h-[5px] w-[9px]"><use href="#down" /></svg>
        </div>
      </div>
    </aside>

    <!-- Splitter -->
    <div class="w-1.5 shrink-0 border-x border-[#6c95cc] bg-[#aecbf5]"></div>

    <!-- Editor -->
    <main class="flex min-w-0 flex-1 flex-col">
      <div class="flex min-h-0 flex-1">
        <div class="relative flex min-w-0 flex-1 bg-linear-to-b from-[#a4c1ea] via-[#567eb5] via-80% to-[#638dc8] px-[122px] py-[17px]">
          <svg class="absolute left-0 top-0 h-40 w-[420px]" viewBox="0 0 420 160"><path d="M0 0h330Q130 12 0 38z" fill="#fff" opacity=".22" /></svg>

          <!-- Slide -->
          <article class="relative flex-1 bg-white text-black shadow-[3px_3px_6px_#0009] [text-spacing-trim:space-all]">
            <h2 class="flex h-[73px] items-center bg-[#339966] pl-[86px] text-[34px] font-light">阻焊制作要求</h2>
            <h3 class="mt-[18px] flex gap-2.5 pl-[78px] text-[27px] font-medium leading-9"><b class="text-2xl leading-9">5.</b><span>阻焊塞孔要求<b class="text-2xl">:</b></span></h3>

            <div class="mt-[23px] flex pl-[86px]">
              <table class="w-[570px] table-fixed border-collapse whitespace-nowrap text-lg leading-[25px] font-['Liberation_Serif','Noto_Sans_CJK_SC',serif]">
                <colgroup><col class="w-[9px]"><col><col class="w-[9px]"></colgroup>
                <tr class="h-1 border-b-2 border-[#444]"><td></td><td class="border-x-2 border-[#222]"></td><td></td></tr>
                <tr class="h-[88px]"><td></td><td class="border-2 border-[#333] pl-[3px] text-[#f01818]">a、钻孔文件以0.4mm为界，<span class="font-['Noto_Sans_CJK_SC']">≤</span>0.4mm的钻孔（指钻刀直径），塞孔<br>刀径=钻刀+0.15mm；＞0.4mm的钻孔（指钻刀直径），塞孔刀径=钻<br>刀-0.1mm；(0.275mm的塞孔取刀0.4mm)</td><td class="border-b-2 border-[#333]"></td></tr>
                <tr class="h-[33px]"><td></td><td class="border-2 border-[#333] pl-[3px]">b、正常塞孔最大钻孔直径为0.9mm；</td><td class="border-b-2 border-[#333]"></td></tr>
                <tr class="h-[5px]"><td></td><td class="border-l-2 border-[#222]"></td><td></td></tr>
              </table>
              <figure class="ml-[70px] mt-[22px] flex w-[119px] flex-col items-center">
                <svg class="h-[46px] w-[46px]" viewBox="0 0 46 46">
                  <path d="M8.500 1.500h27l9 10v33h-36z" fill="#e4eefc" stroke="#5e82bd" stroke-width="1.500" /><path d="M35 1v11h9z" fill="#fff" stroke="#22304a" />
                  <path d="M22 12h14v13H22zM22 16h14M22 20h14M27 12v13M32 12v13M13 28h8M13 32h8M13 36h8M13 40h8M17 27v13" stroke="#8fb0dd" fill="none" /><path d="M24 39V29h4v10M31 39V32h5v7" fill="#a4c1e8" stroke="#5e82bd" />
                  <path d="M1 6l5-3h15v3H8v17l-4 3H1z" fill="#8cc67e" stroke="#227438" /><path d="M5.500 9.500h16v15h-16z" fill="#f4fbf2" stroke="#b6d9ae" /><path d="M8 12h5l6 10h-5zM18 12h-3L8 22h3z" fill="#1e7a30" />
                </svg>
                <figcaption class="mt-0.5 whitespace-nowrap text-[17px] leading-7">盘中孔制作要求</figcaption>
              </figure>
            </div>

            <div class="mt-[41px] flex pl-[87px]">
              <table class="w-[778px] table-fixed border-collapse whitespace-nowrap text-lg leading-6 text-[#bb1a20] font-['Liberation_Mono','Noto_Sans_CJK_SC',monospace]">
                <colgroup><col class="w-[5px]"><col class="w-[180px]"><col><col class="w-[22px]"></colgroup>
                <tr class="h-[5px]"><td></td><td class="border-x-2 border-[#333]"></td><td class="border-r-2 border-[#333]"></td><td></td></tr>
                <tr class="h-36"><td></td><td class="border-2 border-[#333] pl-[3px]"><span class="font-['Liberation_Serif']">6</span>）阻焊塞孔孔径极<br>差要求：</td><td class="border-2 border-[#333] pb-5 pl-1 leading-[23px]">1.同一生产型号阻焊塞孔孔径相差＞0.2mm；<br>①当客户同一生产型号有多种阻焊塞孔孔径时，建议客户缩小或加大<br>阻焊塞孔孔径；<br>②当客户不同意①时，建议客户走树脂塞孔；</td><td class="border-y-2 border-[#333]"></td></tr>
                <tr class="h-[107px]"><td></td><td class="border-2 border-[#333] pl-[3px]"><span class="font-['Liberation_Serif']">7</span>）厚板阻焊塞孔与<br>线路焊盘距离要求：</td><td class="border-2 border-[#333] pl-1">板厚<span class="font-['Noto_Sans_CJK_SC']">≥</span>3.0mm时，阻焊塞孔距离阻焊开窗焊盘最小5mil；</td><td class="border-y-2 border-[#333]"></td></tr>
                <tr class="h-[84px]"><td class="border-b-2 border-[#333]"></td><td class="border-2 border-[#333] pl-[3px]"><span class="font-['Liberation_Serif']">8</span>）阻焊塞孔与单面<br>湿膜要求：</td><td class="border-2 border-[#333] pl-1">当丝印湿膜为单面湿膜，未塞孔的过孔孔径应<span class="font-['Noto_Sans_CJK_SC']">≥</span>0.35mm，否则需评审</td><td class="border-y-2 border-[#333]"></td></tr>
                <tr class="h-[5px]"><td></td><td class="border-x-2 border-[#333]"></td><td class="border-r-2 border-[#333]"></td><td></td></tr>
              </table>
              <p class="ml-[49px] mt-[60px] whitespace-nowrap text-[34px] font-light leading-[42px]">塞孔极差要求暂时忽略</p>
            </div>

            <!-- Green pointer arrow over the table -->
            <svg class="absolute left-[744px] top-[487px] h-[76px] w-[462px]" viewBox="0 0 462 76"><path d="M24 64L457 7" stroke="#00fa00" stroke-width="5" stroke-linecap="round" /><path d="M1 67L28 57v16z" fill="#00fa00" stroke="#00fa00" stroke-linejoin="round" /></svg>
          </article>
        </div>

        <!-- Editor scrollbar -->
        <div class="flex w-4 flex-col bg-[#a5c4f0]">
          <div class="flex flex-1 flex-col items-center border-x border-[#8eafdc] bg-[#7a9bca] py-1.5 text-[#3b5379]">
            <svg class="h-[5px] w-[9px]"><use href="#up" /></svg>
            <div class="mt-[170px] h-[9px] w-[13px] rounded-sm border border-[#5b7499] bg-[#e8f0fb]"></div>
            <svg class="mt-auto h-[5px] w-[9px]"><use href="#down" /></svg>
          </div>
          <div class="flex h-[49px] flex-col items-center gap-1.5 pt-1.5 text-black">
            <button aria-label="上一张幻灯片"><svg class="h-2.5 w-2" viewBox="0 0 8 10"><path d="M0 4h8L4 0zM0 9h8L4 5z" /></svg></button>
            <button aria-label="下一张幻灯片"><svg class="h-2.5 w-2" viewBox="0 0 8 10"><path d="M0 0h8L4 4zM0 5h8L4 9z" /></svg></button>
          </div>
        </div>
      </div>
      <div class="h-1.5 shrink-0 border-y border-b-[#6c95cc] border-t-[#dfedff] bg-[#aecbf5]"></div>
      <div class="flex h-[46px] shrink-0 border-b border-[#5f87bd] bg-white">
        <textarea aria-label="备注" class="flex-1 resize-none overflow-hidden pl-2.5 pt-1 text-base leading-6 text-black">单击此处添加备注</textarea>
        <div class="flex w-4 flex-col items-center justify-between border-l border-[#8eafdc] bg-[#8dabd8] py-1.5 text-[#62799e]">
          <svg class="h-[5px] w-[9px]"><use href="#up" /></svg>
          <svg class="h-[5px] w-[9px]"><use href="#down" /></svg>
        </div>
      </div>
    </main>
  </div>

  <!-- Status bar -->
  <footer class="flex h-[22px] shrink-0 items-center border-t border-white bg-linear-to-b from-[#d7e6f9] via-[#b8d1f4] via-50% to-[#d7e6f9] text-[#1d3f7a]">
    <span class="flex h-full w-[97px] items-center border-r border-[#8fb0de] pl-2">幻灯片 33/140</span>
    <span class="flex h-full w-[104px] items-center border-r border-[#8fb0de] pl-4">“Office 主题”</span>
    <span class="flex h-full w-[110px] items-center border-r border-[#8fb0de] pl-[9px]">中文(简体，中国)</span>
    <div class="ml-auto flex h-full items-center border-l border-[#6e93c9] bg-linear-to-b from-[#c0d6f5] via-[#86aade] via-50% to-[#a5c4ee] pl-[5px] pr-[5px]">
      <div class="flex h-[18px] w-[57px] items-center justify-around rounded-sm border border-[#7191be] bg-[#d3e0f2]">
        <button aria-label="普通视图"><svg class="h-[11px] w-3" fill="#fff" stroke="#444"><path d="M.5 .5h11v10H.5z" /><path d="M4 0v11M6 3h4v3H6zM4 8h8" /></svg></button>
        <button aria-label="幻灯片浏览"><svg class="h-[11px] w-3" fill="#fff" stroke="#444"><path d="M.5 .5h4v3h-4zM7.500 .5h4v3h-4zM.5 6.500h4v3h-4zM7.500 6.500h4v3h-4z" /></svg></button>
        <button aria-label="幻灯片放映"><svg class="h-3 w-3" fill="#fff" stroke="#444"><path d="M0 .5h12M1.500 1v5h9V1M6 6v3M3 11.500h6L6 8z" /></svg></button>
      </div>
      <button class="ml-[7px] w-[34px] text-[#3b5c9a]">143%</button>
      <button aria-label="缩小" class="ml-[7px]"><svg class="h-4 w-4" viewBox="0 0 16 16"><circle cx="8" cy="8" r="7.500" fill="#e2eaf6" stroke="#56749f" /><path d="M4 8h8" stroke="#444c5c" stroke-width="2" /></svg></button>
      <div class="relative mx-px w-[101px]">
        <input type="range" min="0" max="100" value="54" aria-label="显示比例" class="absolute inset-0 w-full opacity-0">
        <svg class="h-3.5 w-[101px]" viewBox="0 0 101 14"><path d="M0 7.500h101" stroke="#e4eefb" /><path d="M0 6.500h101" stroke="#5b7fb2" /><path d="M51.500 1.500h8v8l-4 4-4-4z" fill="#e6eefa" stroke="#4a678f" /><path d="M55.500 4v5" stroke="#4a678f" /></svg>
      </div>
      <button aria-label="放大"><svg class="h-4 w-4" viewBox="0 0 16 16"><circle cx="8" cy="8" r="7.500" fill="#e2eaf6" stroke="#56749f" /><path d="M4 8h8M8 4v8" stroke="#444c5c" stroke-width="2" /></svg></button>
      <button aria-label="适应窗口" class="ml-2"><svg class="h-[15px] w-4" viewBox="0 0 16 15" fill="none" stroke="#444"><rect x=".5" y=".5" width="15" height="14" rx="2" fill="#eef3fb" stroke="#7c8fae" /><path d="M3 3h10v9H3z" stroke-dasharray="1 1" /><path d="M8 2v4M8 9v4M2 7.500h4M10 7.500h4" /></svg></button>
    </div>
  </footer>

  <!-- Taskbar -->
  <div class="flex h-10 shrink-0 items-stretch bg-linear-to-b from-[#3c5373] via-[#0e2a54] via-15% to-[#0b2a5c] text-white">
    <button aria-label="开始" class="flex w-[60px] items-center pl-2">
      <svg class="h-[38px] w-[38px]" viewBox="0 0 38 38"><defs><radialGradient id="orb" cx=".5" cy=".85" r=".9"><stop offset="0" stop-color="#5fd3f2" /><stop offset=".5" stop-color="#246a9f" /><stop offset="1" stop-color="#9db4c6" /></radialGradient></defs><circle cx="19" cy="19" r="18" fill="url(#orb)" stroke="#1c3a58" /><path d="M11 11q4-2 8 0l-2 7q-3-2-8 0z" fill="#e65a28" /><path d="M20 12q4 2 9 0l-2 7q-5 2-9 0z" fill="#84bf38" /><path d="M9 20q4-2 8 0l-2 7q-3-2-8 0z" fill="#3f97dc" /><path d="M18 21q4 2 9 0l-2 7q-5 2-9 0z" fill="#f8ca35" /></svg>
    </button>
    <div class="flex gap-1 py-px [&>button]:flex [&>button]:w-[58px] [&>button]:items-center [&>button]:justify-center [&>button]:rounded-sm [&>button]:border [&>button]:border-[#71829d] [&>button]:bg-linear-to-br [&>button]:from-[#7888a1] [&>button]:via-[#30486d] [&>button]:via-50% [&>button]:to-[#1a3762]">
      <button aria-label="贝壳"><svg class="h-8 w-8" viewBox="0 0 32 32"><path d="M10 28L8 24C2 21-1 15 1 11c1-3 3-3 4-5 2-3 5-3 7-4 3-2 6-2 9 0 3 1 5 1 7 4 3 4 4 9 2 13l-6 7z" fill="#f8d378" stroke="#c8872a" /><path d="M12 26L4 9M14 25L9 4M16 25V3M18 26l6-21" stroke="#dd9f45" /><path d="M21 11l3 7 8 1-6 5 2 7-7-3-7 3 2-7-5-5 7-1z" fill="#f29434" stroke="#aa4f12" /></svg></button>
      <button aria-label="记事本"><svg class="h-7 w-[26px]" viewBox="0 0 26 28"><rect x="1" y="1" width="24" height="26" rx="2" fill="#eaf8fd" stroke="#7cc4dc" /><path d="M4 5h18M4 9h18M4 13h18M4 17h18M4 21h18" stroke="#2c88ad" stroke-width="2" /></svg></button>
      <button aria-label="Genesis"><svg class="h-8 w-8" viewBox="0 0 32 32"><path d="M28 1c-6 1-14 1-18 6L3 18c-3 6-1 12 5 12h10c5 0 8-3 9-8l1-7H16l-2 5h7c0 4-2 5-5 5h-5c-4 0-4-4-2-7l4-6c3-5 8-4 13-6z" fill="#e2341d" stroke="#7d130b" /></svg></button>
      <button aria-label="Total Commander"><svg class="h-8 w-[31px]" viewBox="0 0 31 32"><path d="M1 1h27l2 3v27H1z" fill="#3c56c8" stroke="#182b86" /><path d="M9 1h14v10H9z" fill="#dfe4f2" /><path d="M17 2h4v7h-4z" fill="#3c56c8" /><path d="M4 14h23v17H4z" fill="#fff" /><path d="M6 18h19M6 22h19M6 26h10" stroke="#b45050" /><text x="16" y="30" font-size="8" fill="#333">64</text></svg></button>
      <button aria-label="P"><svg class="h-8 w-8" viewBox="0 0 32 32"><path d="M12 10c6-5 18-4 18 4 0 7-7 10-13 9l-1 7H7l2-14z" fill="#169546" /><path d="M4 10V2h20M12 13l-4 16" stroke="#1da355" fill="none" /><path d="M9 16h5M9 19h5M9 22h5" stroke="#0a5c2a" /></svg></button>
      <button aria-label="钉钉"><svg class="h-7 w-7" viewBox="0 0 28 28"><rect width="28" height="28" rx="6" fill="#148ef4" /><path d="M7 5c5 3 9 4 14 8 1 2-1 4-3 6l2 1-8 5 2-5c-4-1-5-3-5-4l3 1c-4-3-5-7-5-12z" fill="#fff" /></svg></button>
      <button aria-label="Word"><svg class="h-[30px] w-[31px]" viewBox="0 0 31 30"><path d="M1 26V10Q1 1 10 1h16v5M1 26h8" fill="#3b62b4" stroke="#c6d8f4" stroke-width="1.500" /><path d="M9 3l21 3-1 23-22-3z" fill="#f7faff" stroke="#b8c8e2" /><path d="M21 11h6M21 15h6M11 19h16M11 23h15" stroke="#2f57a7" stroke-width="2" /><path d="M11 8l2 7 2-6 2 6 2-7" stroke="#2f57a7" stroke-width="2" fill="none" /></svg></button>
      <span class="flex w-[58px]"><button aria-label="Excel" class="flex w-[52px] items-center justify-center rounded-sm border border-[#71829d] bg-linear-to-br from-[#7888a1] via-[#30486d] to-[#1a3762]"><svg class="h-[30px] w-[31px]" viewBox="0 0 31 30"><path d="M1 26V10Q1 1 10 1h16v5M1 26h8" fill="#569b3e" stroke="#c6e6b8" stroke-width="1.500" /><path d="M9 3l21 3-1 23-22-3z" fill="#f6fcf3" stroke="#bfdcb4" /><path d="M21 10h6v3h-6zM21 16h6v3h-6zM12 21h6v4h-6zM21 22h6v4h-6z" fill="#83b96c" /><path d="M8 7h5l6 12h-5zM18 7h-4L7 18h4z" fill="#236c24" /></svg></button><i class="w-[3px] border-r border-[#71829d] bg-[#30486d]"></i><i class="w-[3px] border-r border-[#71829d] bg-[#1f3a63]"></i></span>
      <button aria-label="CAM 1"><svg class="h-7 w-[34px]"><use href="#disc" /></svg></button>
      <span class="flex w-[58px]"><button aria-label="X" class="flex w-[52px] items-center justify-center rounded-sm border border-[#71829d] bg-linear-to-br from-[#7888a1] via-[#30486d] to-[#1a3762]"><svg class="h-7 w-8" viewBox="0 0 32 28"><path d="M1 1h8l22 26h-8z" fill="#81127e" stroke="#fff" /><path d="M31 1L1 27" stroke="#fff" stroke-width="3" /><path d="M31 1L1 27" stroke="#222" /></svg></button><i class="w-[3px] border-r border-[#71829d] bg-[#30486d]"></i><i class="w-[3px] border-r border-[#71829d] bg-[#1f3a63]"></i></span>
      <button aria-label="CAM 2"><svg class="h-7 w-[34px]"><use href="#disc" /></svg></button>
      <span class="flex w-[58px]"><button aria-label="PowerPoint" class="flex w-[58px] items-center justify-center rounded-sm border border-[#c6d0dd] bg-linear-to-br from-[#d8dfe8] via-[#97a6bb] to-[#b3c0d2]"><svg class="h-[30px] w-[31px]" viewBox="0 0 31 30"><path d="M1 26V10Q1 1 10 1h16v5M1 26h8" fill="#ef9a7a" stroke="#e5603a" stroke-width="1.500" /><path d="M9 3l21 3-1 23-22-3z" fill="#fff7f3" stroke="#e0ad9c" /><path d="M10 9l17 1-1 13-17-1z" fill="#de4d1d" /><circle cx="21" cy="16" r="4" fill="#fff" /><path d="M21 16v-4h4v4z" fill="#de4d1d" /><path d="M11 13h5M11 16h5M11 19h5" stroke="#fff" stroke-width="1.500" /></svg></button></span>
    </div>

    <!-- Tray -->
    <div class="ml-auto flex items-center gap-2">
      <svg class="h-4 w-[15px]" viewBox="0 0 15 16"><path d="M.5 7.500h14v7H.5z" fill="#ddd" stroke="#888" /><path d="M2 10h11M2 12h11" stroke="#555" stroke-dasharray="1 1" /><path d="M4 7q0-3 3-3t6-2" stroke="#ccc" fill="none" /></svg>
      <svg class="h-4 w-4" viewBox="0 0 16 16"><circle cx="8" cy="8" r="7.500" fill="#1a2ec8" stroke="#dde" /><path d="M6 6.500c0-3 4.500-3 4.500-.5C10.500 7.500 8 8 8 9.500M8 11v1.500" stroke="#fff" stroke-width="1.500" fill="none" /></svg>
      <svg class="mx-0.5 mb-1 h-[18px] w-2" viewBox="0 0 8 18" fill="none" stroke="#fff"><path d="M.5 4.500h5v3h-5zM2.500 4V1.500h5v4H6" /><path d="M1 14h6l-3 3z" fill="#fff" stroke="none" /></svg>
      <svg class="mr-1 h-1 w-2 text-white"><use href="#up" /></svg>
      <svg class="h-4 w-[15px]" viewBox="0 0 15 16"><path d="M1.500 1v14" stroke="#fff" /><path d="M2 2q3-2 5 0t5 0v7H2z" fill="#eee" /><circle cx="10" cy="11" r="4.500" fill="#d92a1c" /><path d="M8 9l4 4M12 9l-4 4" stroke="#fff" stroke-width="1.500" /></svg>
      <svg class="h-4 w-4" viewBox="0 0 16 16"><path d="M1 5h3l4-4v14l-4-4H1z" fill="#fff" /><path d="M10 5q2 3 0 6M12 3q4 5 0 10" stroke="#dde" fill="none" /></svg>
      <svg class="ml-0.5 h-4 w-4" viewBox="0 0 16 16" fill="none" stroke="#fff"><path d="M5.500 3.500h9v8h-9zM7 14.500h7M10 12v2M1 1v4h4V1M3 5v9h3" /></svg>
      <div class="-mr-1 ml-1 w-[67px] text-center text-xs leading-[18px]">12:30<br>2023/10/15</div>
      <button aria-label="显示桌面" class="mr-0.5 h-full w-[13px] self-stretch border border-[#7b8da8] bg-linear-to-b from-[#6d7f9a] to-[#1a3158]"></button>
    </div>
  </div>
</body>
</html>
